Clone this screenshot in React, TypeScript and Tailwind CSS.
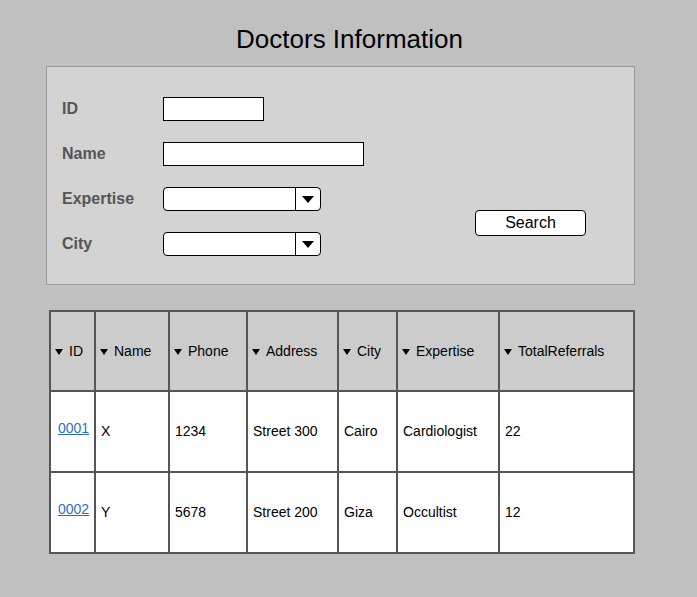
import React from "react";

const cols = ["ID", "Name", "Phone", "Address", "City", "Expertise", "TotalReferrals"];
const rows = [
  ["0001", "X", "1234", "Street 300", "Cairo", "Cardiologist", "22"],
  ["0002", "Y", "5678", "Street 200", "Giza", "Occultist", "12"],
];

function Select() {
  return (
    <div className="flex h-[24px] w-[158px] rounded-[4px] border border-black bg-white">
      <div className="flex-1" />
      <div className="flex w-[25px] items-center justify-center border-l border-black">
        <svg width="12" height="7" viewBox="0 0 12 7">
          <path d="M0 0h12L6 7z" fill="#000" />
        </svg>
      </div>
    </div>
  );
}

export default function App() {
  return (
    <div
      className="min-h-[597px] w-[697px] bg-[#c0c0c0] pt-[24px]"
      style={{ fontFamily: '"Liberation Sans", Arial, sans-serif' }}
    >
      <h1 className="ml-[2px] text-center text-[26px] leading-[30px] text-black">Doctors Information</h1>
      <div className="ml-[46px] mt-[12px] flex h-[219px] w-[589px] border border-[#999] bg-[#d3d3d3] pl-[15px] pt-[30px]">
        <div className="flex flex-col gap-[21px]">
          <div className="flex h-[24px] items-center">
            <div className="w-[101px] text-[16px] font-bold text-[#555]">ID</div>
            <div className="h-[24px] w-[101px] border border-black bg-white" />
          </div>
          <div className="flex h-[24px] items-center">
            <div className="w-[101px] text-[16px] font-bold text-[#555]">Name</div>
            <div className="h-[24px] w-[201px] border border-black bg-white" />
          </div>
          <div className="flex h-[24px] items-center">
            <div className="w-[101px] text-[16px] font-bold text-[#555]">Expertise</div>
            <Select />
          </div>
          <div className="flex h-[24px] items-center">
            <div className="w-[101px] text-[16px] font-bold text-[#555]">City</div>
            <Select />
          </div>
        </div>
        <div className="ml-[111px] mt-[113px]">
          <button className="h-[26px] w-[111px] rounded-[4px] border border-black bg-white text-[16px] leading-[24px] text-black">
            Search
          </button>
        </div>
      </div>
      <div className="ml-[49px] mt-[25px] grid w-[586px] grid-cols-[45px_74px_78px_91px_59px_102px_135px] border-l-2 border-t-2 border-[#555] text-[14px]">
        {cols.map((c) => (
          <div
            key={c}
            className="flex h-[80px] items-center border-b-2 border-r-2 border-[#555] bg-[#cccccc] pl-[4px] text-black"
          >
            <svg width="8" height="6" viewBox="0 0 8 6" className="mr-[6px] mt-[2px]">
              <path d="M0 0h8L4 6z" fill="#000" />
            </svg>
            {c}
          </div>
        ))}
        {rows.map((r) =>
          r.map((v, i) => (
            <div
              key={r[0] + i}
              className={`flex h-[81px] items-center border-b-2 border-r-2 border-[#555] bg-white text-black ${
                i === 0 ? "justify-center pl-[2px]" : "pl-[5px]"
              }`}
            >
              {i === 0 ? (
                <a href="#" className="mb-[6px] text-[#2a6fc4] underline">
                  {v}
                </a>
              ) : (
                v
              )}
            </div>
          ))
        )}
      </div>
    </div>
  );
}
